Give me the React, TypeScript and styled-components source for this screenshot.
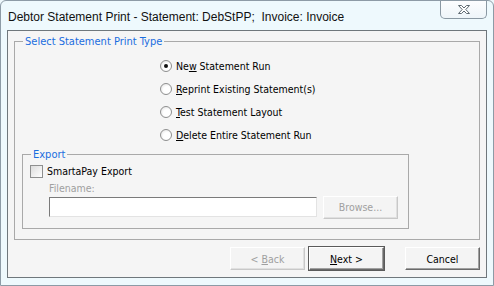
import styled, { createGlobalStyle } from "styled-components";

const GlobalStyle = createGlobalStyle`
  html, body {
    margin: 0;
    padding: 0;
    background: #eef8fc;
  }
  body {
    font-family: Tahoma, "DejaVu Sans Condensed", "Liberation Sans", sans-serif;
    font-size: 10.5px;
  }
`;

const Window = styled.div`
  width: 494px;
  height: 286px;
  box-sizing: border-box;
  background: #eef9fd;
  border: 1px solid #8d9ba6;
  border-radius: 6px 6px 0 0;
  display: flex;
  flex-direction: column;
  overflow: hidden;
`;

const TitleBar = styled.div`
  height: 29px;
  display: flex;
  align-items: flex-start;
  justify-content: space-between;
`;

const Title = styled.div`
  font-family: "Liberation Sans", Arial, sans-serif;
  font-size: 12px;
  color: #111;
  padding: 9px 0 0 7px;
`;

const CloseButton = styled.div`
  width: 45px;
  height: 18px;
  margin-right: 6px;
  margin-top: -1px;
  border: 1px solid #8a98a3;
  border-top: none;
  border-radius: 0 0 5px 5px;
  background: linear-gradient(#fdfeff, #eef5f9);
  display: flex;
  align-items: center;
  justify-content: center;
`;

const Client = styled.div`
  flex: 1;
  margin: 0 6px 7px 6px;
  border: 1px solid #6f777c;
  background: #f5f5f5;
  display: flex;
  flex-direction: column;
  padding: 0 6px 0 6px;
`;

const Group = styled.fieldset<{ $main?: boolean }>`
  margin: ${(p) => (p.$main ? "4px 0 0 0" : "0")};
  border: 1px solid #a9a9a9;
  padding: ${(p) => (p.$main ? "10px 70px 10px 7px" : "2px 9px 9px 7px")};
  display: flex;
  flex-direction: column;
`;

const Legend = styled.legend`
  font-size: 11px;
  line-height: 13px;
  color: #1a6ddf;
  padding: 0 2px;
  margin-left: 1px;
`;

const RadioList = styled.div`
  display: flex;
  flex-direction: column;
  gap: 7px;
  padding-left: 138px;
  margin-bottom: 5px;
`;

const Row = styled.label`
  display: flex;
  align-items: center;
  height: 16px;
  color: #000;
  gap: 4px;
`;

const RadioCircle = styled.span<{ $checked?: boolean }>`
  width: 10px;
  height: 10px;
  border-radius: 50%;
  border: 1px solid #8e8f8f;
  background: radial-gradient(circle at 60% 60%, #ffffff 40%, #dcdcdc 100%);
  display: flex;
  align-items: center;
  justify-content: center;
  &::after {
    content: "";
    width: 4px;
    height: 4px;
    border-radius: 50%;
    background: ${(p) => (p.$checked ? "#111" : "transparent")};
  }
`;

const CheckBox = styled.span`
  width: 11px;
  height: 11px;
  border: 1px solid #8e8f8f;
  background: linear-gradient(135deg, #dcdcdc, #ffffff);
`;

const FieldLabel = styled.div`
  color: #a0a0a0;
  line-height: 13px;
  margin: 3px 0 0 19px;
`;

const InputRow = styled.div`
  display: flex;
  align-items: center;
  gap: 6px;
  padding-left: 19px;
  height: 24px;
`;

const TextBox = styled.div`
  width: 266px;
  height: 18px;
  background: #fff;
  border: 1px solid;
  border-color: #7a7a7a #e3e3e3 #e3e3e3 #7a7a7a;
`;

const Button = styled.button<{ $default?: boolean }>`
  width: 75px;
  height: 23px;
  box-sizing: border-box;
  font-family: inherit;
  font-size: 10.5px;
  padding: 0;
  background: #f4f4f4;
  color: ${(p) => (p.disabled ? "#a0a0a0" : "#000")};
  border: 1px solid;
  border-color: ${(p) =>
    p.disabled ? "#fff #c8c8c8 #c8c8c8 #fff" : "#fff #6a6a6a #6a6a6a #fff"};
  box-shadow: ${(p) =>
    p.$default
      ? "0 0 0 1px #5a5a5a, inset -1px -1px 0 #a0a0a0"
      : p.disabled
      ? "inset -1px -1px 0 #e0e0e0"
      : "inset -1px -1px 0 #a0a0a0"};
`;

const Footer = styled.div`
  display: flex;
  justify-content: flex-end;
  align-items: center;
  padding-top: 7px;
  gap: 4px;
`;

const Spacer = styled.span`
  width: 13px;
`;

const U = styled.span`
  text-decoration: underline;
`;

const options = [
  { pre: "Ne", key: "w", post: " Statement Run", checked: true },
  { pre: "", key: "R", post: "eprint Existing Statement(s)" },
  { pre: "", key: "T", post: "est Statement Layout" },
  { pre: "", key: "D", post: "elete Entire Statement Run" },
];

export default function App() {
  return (
    <>
      <GlobalStyle />
      <Window>
        <TitleBar>
          <Title>Debtor Statement Print - Statement: DebStPP;&nbsp; Invoice: Invoice</Title>
          <CloseButton>
            <svg width="14" height="11" viewBox="0 0 14 11">
              <path
                d="M1.5 1.5 L4.5 1.5 L7 4 L9.5 1.5 L12.5 1.5 L8.8 5.5 L12.5 9.5 L9.5 9.5 L7 7 L4.5 9.5 L1.5 9.5 L5.2 5.5 Z"
                fill="#fff"
                stroke="#5f6a72"
                strokeWidth="1"
              />
            </svg>
          </CloseButton>
        </TitleBar>
        <Client>
          <Group $main>
            <Legend>Select Statement Print Type</Legend>
            <RadioList>
              {options.map((o) => (
                <Row key={o.post}>
                  <RadioCircle $checked={o.checked} />
                  <span>
                    {o.pre}
                    <U>{o.key}</U>
                    {o.post}
                  </span>
                </Row>
              ))}
            </RadioList>
            <Group>
              <Legend>Export</Legend>
              <Row>
                <CheckBox />
                <span>SmartaPay Export</span>
              </Row>
              <FieldLabel>Filename:</FieldLabel>
              <InputRow>
                <TextBox />
                <Button disabled>Browse...</Button>
              </InputRow>
            </Group>
          </Group>
          <Footer>
            <Button disabled>
              &lt; <U>B</U>ack
            </Button>
            <Button $default>
              <U>N</U>ext &gt;
            </Button>
            <Spacer />
            <Button>Cancel</Button>
          </Footer>
        </Client>
      </Window>
    </>
  );
}
